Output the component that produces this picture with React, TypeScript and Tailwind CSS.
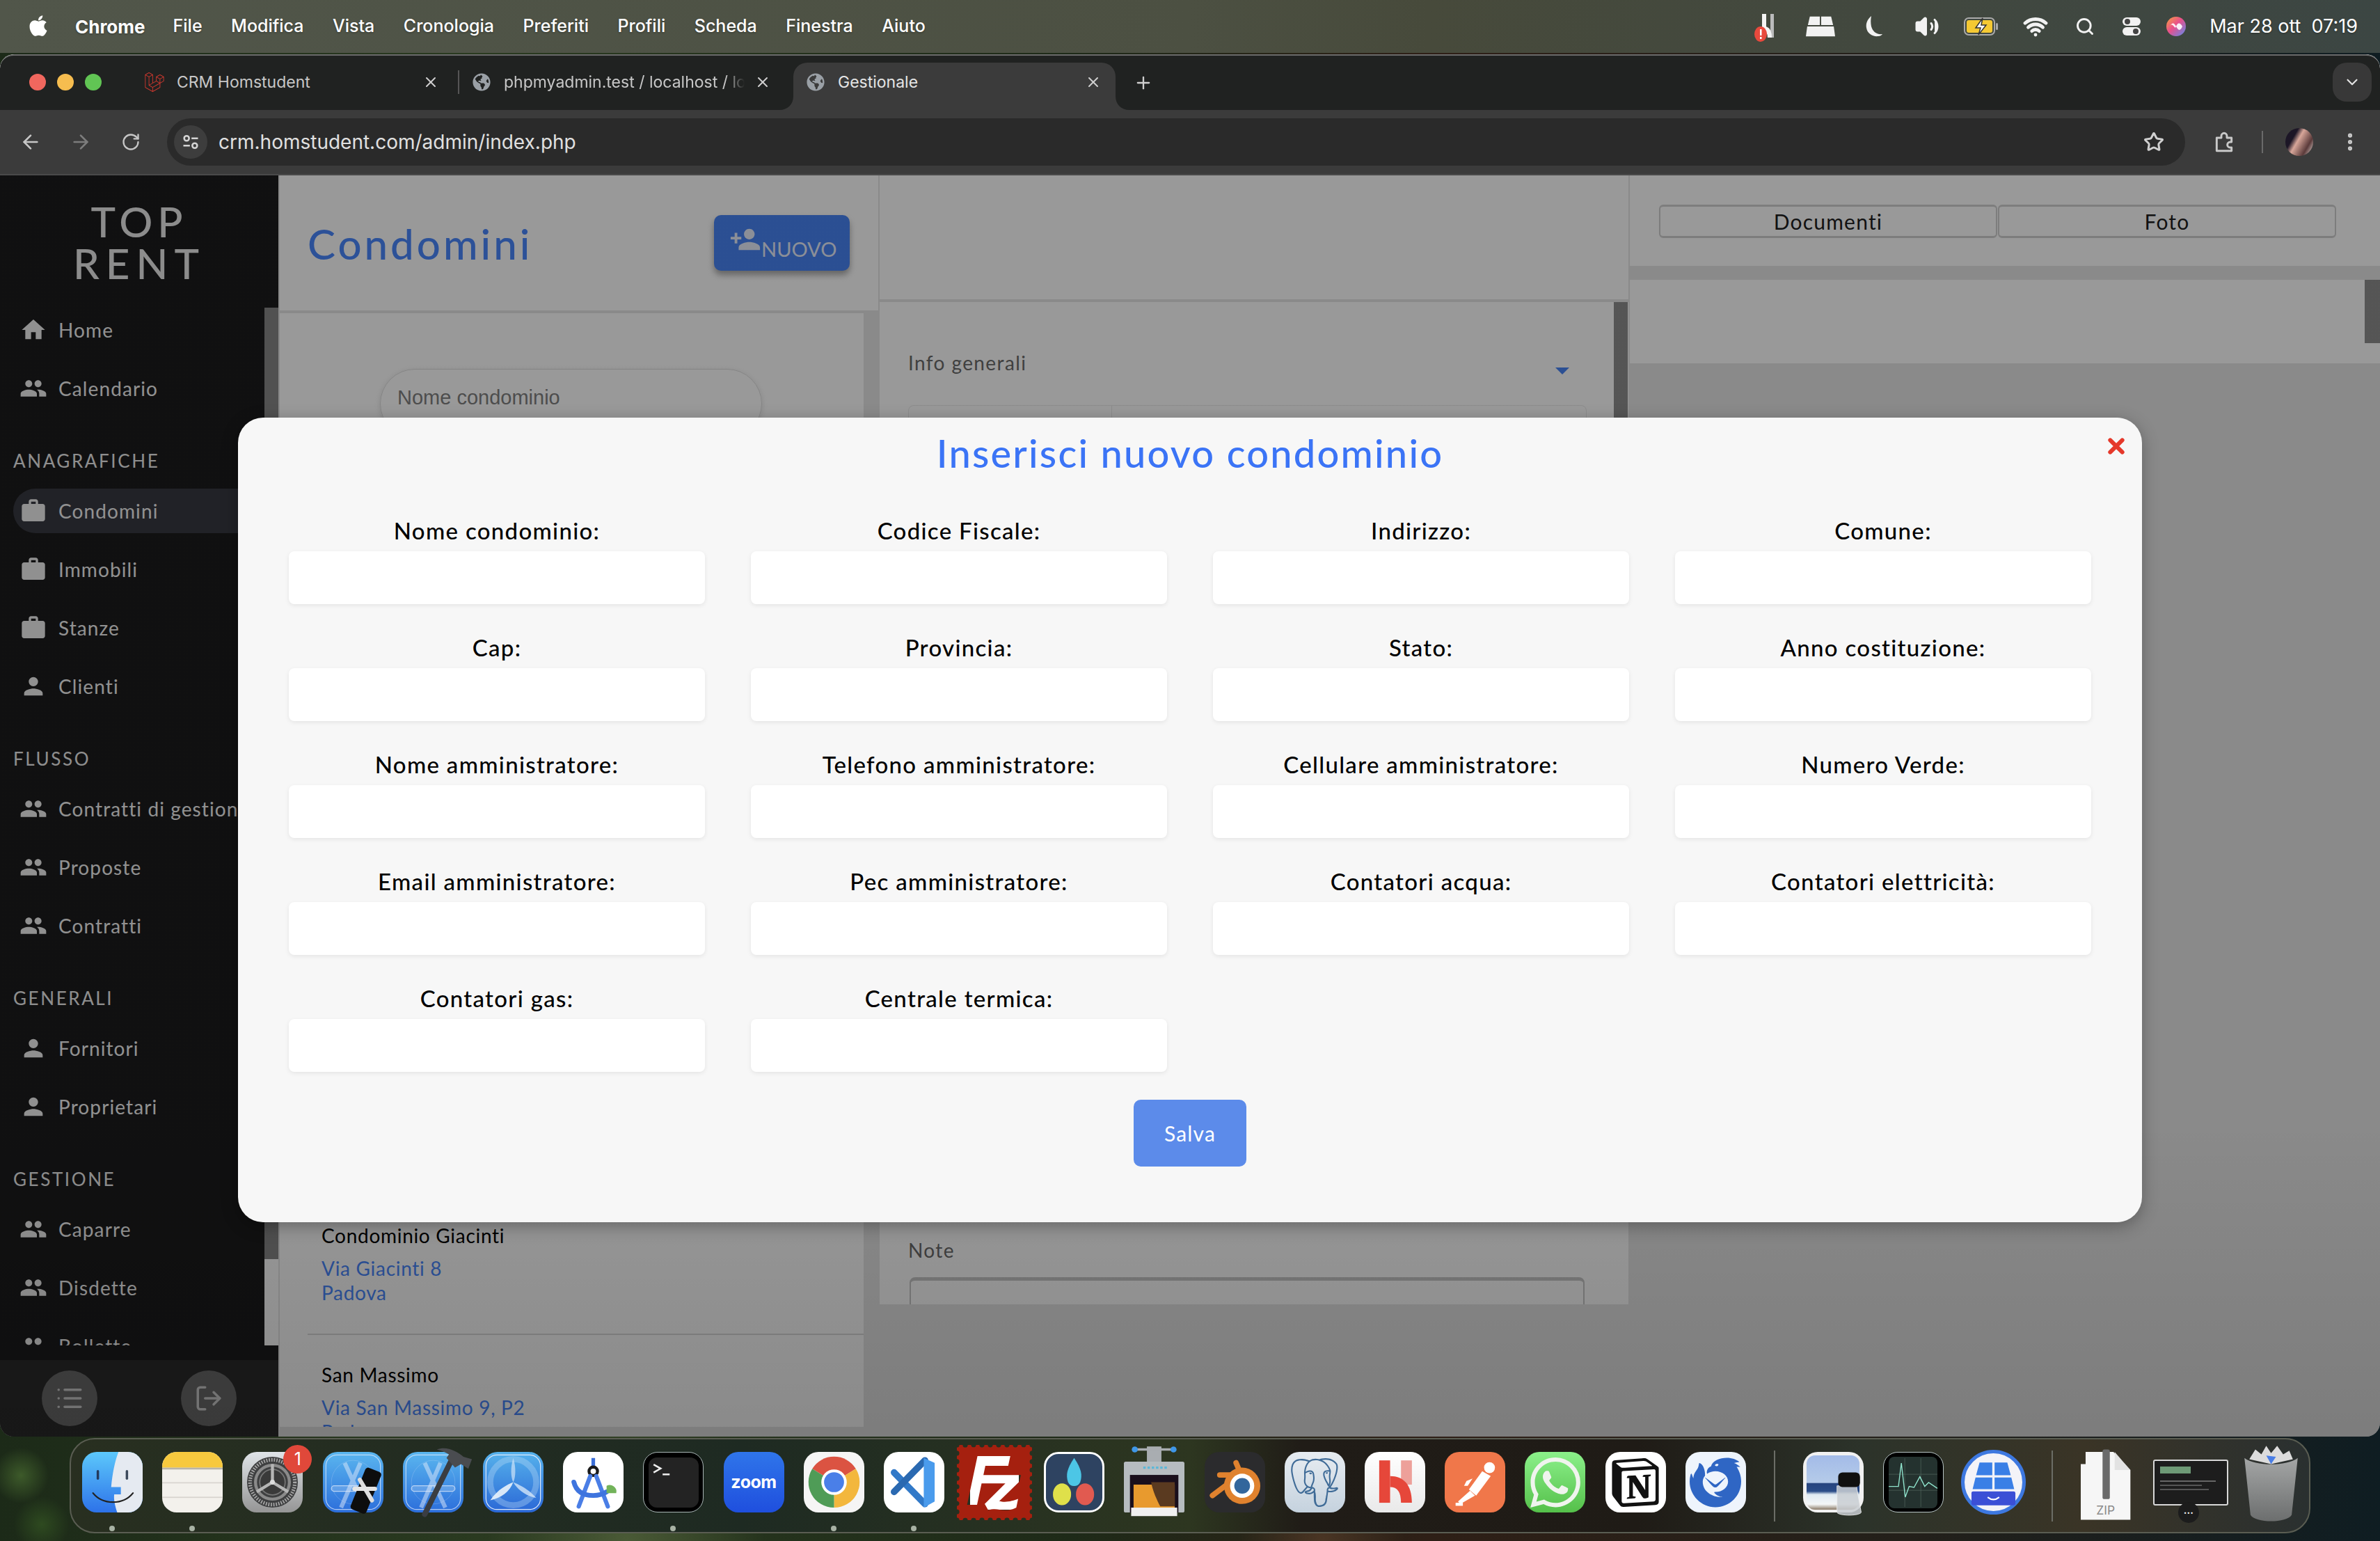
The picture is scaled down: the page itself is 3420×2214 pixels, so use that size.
import React from "react";
import { ArrowLeft, ArrowRight, RotateCw, Star, MoreVertical, Plus, X, ChevronDown, Search, Wifi, List, LogOut, Volume2 } from "lucide-react";
import { FaApple, FaGlobeAmericas } from "react-icons/fa";
import { SiLaravel, SiPostgresql, SiWhatsapp, SiNotion, SiThunderbird, SiFilezilla } from "react-icons/si";

const APP = "font-['Lato','Open_Sans',sans-serif]";

const P = {
  home: "M10 20v-6h4v6h5v-8h3L12 3 2 12h3v8z",
  people: "M16 11c1.66 0 2.99-1.34 2.99-3S17.66 5 16 5c-1.66 0-3 1.34-3 3s1.34 3 3 3zm-8 0c1.66 0 2.99-1.34 2.99-3S9.66 5 8 5C6.34 5 5 6.34 5 8s1.34 3 3 3zm0 2c-2.33 0-7 1.17-7 3.5V19h14v-2.5c0-2.33-4.67-3.5-7-3.5zm8 0c-.29 0-.62.02-.97.05 1.16.84 1.97 1.97 1.97 3.45V19h6v-2.5c0-2.33-4.67-3.5-7-3.5z",
  work: "M20 6h-4V4c0-1.11-.89-2-2-2h-4c-1.11 0-2 .89-2 2v2H4c-1.11 0-1.99.89-1.99 2L2 19c0 1.11.89 2 2 2h16c1.11 0 2-.89 2-2V8c0-1.11-.89-2-2-2zm-6 0h-4V4h4v2z",
  person: "M12 12c2.21 0 4-1.79 4-4s-1.79-4-4-4-4 1.79-4 4 1.79 4 4 4zm0 2c-2.67 0-8 1.34-8 4v2h16v-2c0-2.66-5.33-4-8-4z",
  add: "M15 12c2.21 0 4-1.79 4-4s-1.79-4-4-4-4 1.79-4 4 1.79 4 4 4zm-9-2V7H4v3H1v2h3v3h2v-3h3v-2H6zm9 4c-2.67 0-8 1.34-8 4v2h16v-2c0-2.66-5.33-4-8-4z",
};

const MI = ({ d, className }: { d: string; className: string }) => (
  <svg viewBox="0 0 24 24" className={className} fill="currentColor"><path d={d} /></svg>
);

const sections: { title?: string; items: [string, string, boolean?][] }[] = [
  { items: [["home", "Home"], ["people", "Calendario"]] },
  { title: "ANAGRAFICHE", items: [["work", "Condomini", true], ["work", "Immobili"], ["work", "Stanze"], ["person", "Clienti"]] },
  { title: "FLUSSO", items: [["people", "Contratti di gestione"], ["people", "Proposte"], ["people", "Contratti"]] },
  { title: "GENERALI", items: [["person", "Fornitori"], ["person", "Proprietari"]] },
  { title: "GESTIONE", items: [["people", "Caparre"], ["people", "Disdette"], ["people", "Bollette"]] },
];

const fields = [
  "Nome condominio:", "Codice Fiscale:", "Indirizzo:", "Comune:",
  "Cap:", "Provincia:", "Stato:", "Anno costituzione:",
  "Nome amministratore:", "Telefono amministratore:", "Cellulare amministratore:", "Numero Verde:",
  "Email amministratore:", "Pec amministratore:", "Contatori acqua:", "Contatori elettricità:",
  "Contatori gas:", "Centrale termica:",
];

function MenuBar() {
  const items = ["File", "Modifica", "Vista", "Cronologia", "Preferiti", "Profili", "Scheda", "Finestra", "Aiuto"];
  return (
    <div className="h-[76px] flex items-center bg-[linear-gradient(90deg,#51564a,#4c5042_50%,#474a3b_60%,#3c4643)] text-white font-['Inter',sans-serif] text-[25px] font-medium [text-shadow:0_1px_3px_rgba(0,0,0,.35)]">
      <FaApple className="w-[34px] h-[34px] ml-[38px] mr-[36px] -mt-[3px]" />
      <span className="font-bold text-[26px] mr-[40px]">Chrome</span>
      <div className="flex gap-[41.5px]">{items.map((t) => <span key={t}>{t}</span>)}</div>
      <div className="ml-auto flex items-center mr-[32px]">
        <span className="w-[80px] flex justify-center">
          <svg viewBox="0 0 44 44" className="w-[44px] h-[44px] overflow-visible">
            <rect x="18" y="4" width="6" height="24" fill="#f4f4f4" /><rect x="30" y="4" width="5" height="34" fill="#bbb" /><path d="M18 22q14 -2 14 16h-6q0 -10 -8 -10z" fill="#f4f4f4" />
            <ellipse cx="16" cy="33" rx="9" ry="11" fill="#e8493d" /><rect x="15" y="26" width="2.5" height="9" fill="#fff" /><rect x="15" y="37" width="2.5" height="3" fill="#fff" />
          </svg>
        </span>
        <span className="w-[79px] flex justify-center">
          <svg viewBox="0 0 44 30" className="w-[42px] h-[30px]" fill="#f2f2f2">
            <path d="M6 0h15v13H3zM23 0h15l3 13H23zM2 15h40l2 15H0z" />
          </svg>
        </span>
        <span className="w-[75px] flex justify-center">
          <svg viewBox="0 0 28 30" className="w-[28px] h-[30px]" fill="#f2f2f2"><path d="M10 0C4 5 2 11 3 17c1 8 9 13 17 12 3 0 5-2 6-3-9 1-14-4-16-11C9 10 9 5 10 0z" /></svg>
        </span>
        <span className="w-[77px] flex justify-center"><Volume2 className="w-[36px] h-[36px] text-[#f2f2f2] fill-[#f2f2f2]" /></span>
        <span className="w-[80px] flex justify-center">
          <svg viewBox="0 0 50 26" className="w-[50px] h-[26px]">
            <rect x="1" y="1" width="43" height="24" rx="6" fill="none" stroke="#aaa" strokeWidth="2" /><rect x="4" y="4" width="37" height="18" rx="3" fill="#f5c933" /><rect x="46" y="8" width="3" height="10" rx="1.5" fill="#aaa" /><path d="M27 1l-10 14h7l-3 10 11-14h-7z" fill="#fff" stroke="#333" strokeWidth="1.5" />
          </svg>
        </span>
        <span className="w-[75px] flex justify-center"><Wifi className="w-[36px] h-[36px] text-[#f2f2f2]" strokeWidth={3.2} /></span>
        <span className="w-[68px] flex justify-center"><Search className="w-[28px] h-[28px] text-[#f2f2f2]" strokeWidth={2.5} /></span>
        <span className="w-[65px] flex justify-center">
          <svg viewBox="0 0 28 28" className="w-[28px] h-[28px]">
            <rect x="1" y="1" width="26" height="12" rx="6" fill="#f2f2f2" /><circle cx="8" cy="7" r="4" fill="#444" /><rect x="1" y="15" width="26" height="12" rx="6" fill="#f2f2f2" /><circle cx="20" cy="21" r="4" fill="#444" />
          </svg>
        </span>
        <span className="w-[64px] flex justify-center">
          <svg viewBox="0 0 30 30" className="w-[30px] h-[30px]">
            <defs><linearGradient id="siri" x1="0" y1="0" x2="1" y2="1"><stop offset="0" stopColor="#f6a33c" /><stop offset=".45" stopColor="#ea4f8b" /><stop offset="1" stopColor="#5a8cf0" /></linearGradient></defs>
            <circle cx="15" cy="15" r="14" fill="url(#siri)" /><path d="M6 15c4-8 7 6 9 0s6-6 9 0c-3 7-6 6-9 0s-6-6-9 0z" fill="#fff" opacity=".9" />
          </svg>
        </span>
        <span className="ml-[16px] font-normal text-[27px] whitespace-pre">Mar 28 ott  07:19</span>
      </div>
    </div>
  );
}

function Tab({ icon, title, width, active, fade, pr }: { icon: React.ReactNode; title: string; width: string; active?: boolean; fade?: boolean; pr: string }) {
  return (
    <div className={`relative h-[68px] flex items-center shrink-0 ${width} ${pr} ${active ? "bg-[#3b3b3b] rounded-t-[20px] text-[#e4e4e4]" : "text-[#c7c7c7]"} pl-[20px] pb-[12px]`}>
      <span className="w-[24px] h-[24px] flex items-center justify-center shrink-0">{icon}</span>
      <span className={`ml-[20px] text-[23px] whitespace-nowrap overflow-hidden flex-1 ${fade ? "mr-[14px] [mask-image:linear-gradient(90deg,#000_92%,transparent)]" : ""}`}>{title}</span>
      <X className="w-[24px] h-[24px] shrink-0 text-[#d0d0d0]" />
      {active && (
        <>
          <svg viewBox="0 0 20 20" className="absolute left-[-20px] bottom-0 w-[20px] h-[20px]"><path d="M20 0v20H0c12 0 20-8 20-20z" fill="#3b3b3b" /></svg>
          <svg viewBox="0 0 20 20" className="absolute right-[-20px] bottom-0 w-[20px] h-[20px]"><path d="M0 0v20h20C8 20 0 12 0 0z" fill="#3b3b3b" /></svg>
        </>
      )}
    </div>
  );
}

function Chrome() {
  return (
    <div className="shrink-0 font-['Inter',sans-serif]">
      <div className="h-[80px] bg-[#202221] border-t-2 border-[#6a6a6a] rounded-t-[20px] flex items-end">
        <div className="h-[68px] flex items-center w-[190px] shrink-0 pl-[42px] gap-[16px] pb-[12px]">
          <span className="w-[24px] h-[24px] rounded-full bg-[#f0675e]" />
          <span className="w-[24px] h-[24px] rounded-full bg-[#f6bd4f]" />
          <span className="w-[24px] h-[24px] rounded-full bg-[#61c554]" />
        </div>
        <Tab width="w-[468px]" pr="pr-[27px]" icon={<SiLaravel className="w-[28px] h-[30px] text-[#d3392f] shrink-0" />} title="CRM Homstudent" />
        <div className="w-[2px] h-[34px] bg-[#555] mb-[23px] shrink-0" />
        <Tab width="w-[480px]" pr="pr-[32px]" fade icon={<FaGlobeAmericas className="w-[26px] h-[26px] text-[#9aa0a6] shrink-0" />} title="phpmyadmin.test / localhost / localhost" />
        <Tab width="w-[463px]" pr="pr-[20px]" active icon={<FaGlobeAmericas className="w-[26px] h-[26px] text-[#9aa0a6] shrink-0" />} title="Gestionale" />
        <Plus className="w-[28px] h-[28px] text-[#cfcfcf] ml-[26px] mb-[25px]" />
        <div className="ml-auto mr-[12px] mb-[12px] w-[56px] h-[56px] rounded-[20px] bg-[#383838] flex items-center justify-center">
          <ChevronDown className="w-[26px] h-[26px] text-[#e2e2e2]" />
        </div>
      </div>
      <div className="h-[92px] bg-[#3b3b3b] flex items-center">
        <ArrowLeft className="w-[32px] h-[32px] text-[#c6c6c6] ml-[28px]" />
        <ArrowRight className="w-[32px] h-[32px] text-[#7d7d7d] ml-[40px]" />
        <RotateCw className="w-[28px] h-[28px] text-[#c6c6c6] ml-[42px]" />
        <div className="ml-[38px] w-[2900px] h-[68px] rounded-full bg-[#2a2a2a] flex items-center pl-[10px]">
          <span className="w-[48px] h-[48px] rounded-full bg-[#3d3d3d] flex items-center justify-center">
            <svg viewBox="0 0 24 24" className="w-[28px] h-[28px]" fill="none" stroke="#d4d4d4" strokeWidth="2.2">
              <circle cx="7" cy="7.5" r="3" /><path d="M13 7.5h8M3 16.5h8" /><circle cx="17" cy="16.5" r="3" />
            </svg>
          </span>
          <span className="ml-[16px] text-[28px] text-[#e0e0e0]">crm.homstudent.com/admin/index.php</span>
          <Star className="ml-auto mr-[30px] w-[30px] h-[30px] text-[#d0d0d0]" strokeWidth={2.4} />
        </div>
        <svg viewBox="0 0 24 24" className="w-[32px] h-[32px] ml-[40px]" fill="none" stroke="#c8c8c8" strokeWidth="2.2" strokeLinejoin="round">
          <path d="M4 7.5h5V5.5a3 3 0 0 1 6 0v2h5v4.5h-1.5a3 3 0 0 0 0 6H20v3.5H4z" />
        </svg>
        <div className="w-[2px] h-[32px] bg-[#6a6a6a] ml-[38px]" />
        <div className="w-[40px] h-[40px] rounded-full ml-[32px] bg-[linear-gradient(120deg,#1c1626_30%,#d8a79a_45%,#5a3a3a_75%,#efe6e0)]" />
        <MoreVertical className="w-[32px] h-[32px] text-[#c8c8c8] ml-[37px]" strokeWidth={2.6} />
      </div>
    </div>
  );
}

function Sidebar() {
  return (
    <aside className={`w-[400px] shrink-0 h-full bg-[#1b1b1c] flex flex-col ${APP}`}>
      <div className="h-[190px] shrink-0 pt-[36px] text-center text-[#e9e9e9] text-[60px] leading-[60px] font-medium">
        <div className="tracking-[7px]">TOP</div>
        <div className="tracking-[9px]">RENT</div>
      </div>
      <div className="flex h-[1491px] shrink-0 overflow-hidden">
        <nav className="w-[380px] shrink-0">
          {sections.map((s, i) => (
            <div key={i} className={i ? "mt-[57px]" : ""}>
              {s.title && <div className="h-[30px] leading-[30px] ml-[19px] text-[26px] tracking-[2.6px] text-[#ececec] mb-[25px]">{s.title}</div>}
              <div className="flex flex-col gap-[20px]">
                {s.items.map(([ic, t, on]) => (
                  <div key={t} className={`h-[64px] ml-[19px] pl-[9px] flex items-center gap-[16px] whitespace-nowrap text-[#f2f2f2] text-[28px] tracking-[1.1px] ${on ? "bg-[#373841] rounded-l-full" : ""}`}>
                    <MI d={(P as any)[ic]} className="w-[40px] h-[40px] shrink-0 text-[#f0f0f0]" />
                    <span>{t}</span>
                  </div>
                ))}
              </div>
            </div>
          ))}
        </nav>
        <div className="w-[20px] shrink-0 bg-white"><div className="h-[1367px] bg-[#878787]" /></div>
      </div>
      <div className="flex-1 mt-[21px] bg-[#2b2b2b] flex items-center pl-[60px] gap-[120px]">
        <span className="w-[80px] h-[80px] rounded-full bg-[#6b6b6b] flex items-center justify-center"><List className="w-[42px] h-[42px] text-[#d0d0d0]" /></span>
        <span className="w-[80px] h-[80px] rounded-full bg-[#6b6b6b] flex items-center justify-center"><LogOut className="w-[42px] h-[42px] text-[#d0d0d0]" /></span>
      </div>
    </aside>
  );
}

function Column1() {
  return (
    <div className={`w-[860px] shrink-0 ml-[2px] flex flex-col ${APP}`}>
      <div className="h-[194px] bg-white flex items-center pl-[40px] shrink-0">
        <h1 className="w-[584px] text-[60px] text-[#4987fd] tracking-[4px] font-medium leading-[72px] mt-[2px]">Condomini</h1>
        <div className="w-[195px] h-[80px] rounded-[10px] bg-[#4884f5] shadow-[0_6px_10px_rgba(0,0,0,.35)] flex items-center pl-[22px] text-[#e8eefc]">
          <MI d={P.add} className="w-[46px] h-[46px] shrink-0 -mt-[10px]" />
          <span className="text-[29px] mt-[18px]">NUOVO</span>
        </div>
      </div>
      <div className="mt-[4px] h-[1600px] w-[839px] bg-white overflow-hidden text-[28px] leading-[36px] tracking-[0.7px]">
        <div className="ml-[144px] mt-[80px] h-[100px] w-[549px] rounded-full border border-[#ddd] shadow-[0_2px_8px_rgba(0,0,0,.12)] flex items-start pt-[22px] pl-[24px] text-[#808080] font-['Liberation_Sans',sans-serif] text-[29px] tracking-normal">Nome condominio</div>
        <div className="mt-[1127px] pl-[60px]">
          <div className="text-black">Condominio Giacinti</div>
          <div className="mt-[12px] text-[#4987fd] leading-[35px]">Via Giacinti 8<br />Padova</div>
        </div>
        <div className="mt-[41px] ml-[40px] h-[2px] bg-[#dcdcdc]" />
        <div className="mt-[39px] pl-[60px]">
          <div className="text-black">San Massimo</div>
          <div className="mt-[12px] text-[#4987fd] leading-[35px]">Via San Massimo 9, P2<br />Padova</div>
        </div>
      </div>
    </div>
  );
}

function Column2() {
  return (
    <div className={`w-[1076px] shrink-0 ml-[2px] flex flex-col ${APP}`}>
      <div className="h-[178px] bg-white shrink-0" />
      <div className="mt-[4px] h-[1440px] bg-white flex overflow-hidden">
        <div className="flex-1 text-[28px] leading-[36px] text-[#6a6a6a] tracking-[1.4px]">
          <div className="pt-[69px] pl-[41px] pr-[64px] flex justify-between items-center">
            <span>Info generali</span>
            <svg viewBox="0 0 20 10" className="w-[20px] h-[10px] mt-[24px]"><path d="M0 0h20L10 10z" fill="#4884f5" /></svg>
          </div>
          <div className="mt-[43px] ml-[41px] mr-[39px] h-[200px] flex border border-[#eaeaea] rounded-t-[8px]">
            <div className="w-[292px] border-r border-[#eaeaea]" />
          </div>
          <div className="mt-[996px] pl-[41px]">Note</div>
          <div className="mt-[21px] ml-[43px] mr-[42px] h-[80px] border-2 border-t-[5px] border-[#c8c8c8] rounded-t-[8px]" />
        </div>
        <div className="w-[20px] bg-white shrink-0"><div className="h-[800px] bg-[#8e8e8e]" /></div>
        <div className="w-[1px] shrink-0" />
      </div>
    </div>
  );
}

function Column3() {
  return (
    <div className={`flex-1 ml-[2px] flex flex-col ${APP}`}>
      <div className="h-[130px] bg-white shrink-0 pt-[42px] pl-[42px] flex gap-[1px] text-[#1d1d1d] text-[30px] tracking-[1.2px]">
        {["Documenti", "Foto"].map((t) => (
          <div key={t} className="w-[486px] h-[48px] border-2 border-t-[3px] border-b-[3px] border-[#d0d0d0] rounded-[6px] flex items-center justify-center">{t}</div>
        ))}
      </div>
      <div className="mt-[20px] h-[120px] bg-white flex justify-end shrink-0">
        <div className="w-[22px] h-[91px] bg-[#8e8e8e]" />
      </div>
    </div>
  );
}

function Modal() {
  return (
    <div className={`absolute left-[342px] top-[348px] w-[2736px] h-[1156px] bg-[#f7f7f7] rounded-[36px] shadow-[0_6px_24px_rgba(0,0,0,.3)] pt-[16px] ${APP}`}>
      <svg viewBox="0 0 24 24" className="absolute right-[24px] top-[28px] w-[26px] h-[26px]"><path d="M4 4l16 16M20 4L4 20" stroke="#e5382a" strokeWidth="5.5" strokeLinecap="round" /></svg>
      <h2 className="text-center text-[56px] leading-[70px] text-[#3b74f6] font-medium tracking-[2.2px]">Inserisci nuovo condominio</h2>
      <div className="mt-[58px] px-[73px] grid grid-cols-4 gap-x-[66px] gap-y-[44px]">
        {fields.map((f) => (
          <div key={f} className="flex flex-col">
            <label className="h-[36px] leading-[36px] text-center text-black text-[33px] font-medium tracking-[1.3px] mb-[12px] whitespace-nowrap">{f}</label>
            <div className="h-[76px] bg-white rounded-[8px] shadow-[0_2px_6px_rgba(0,0,0,.08)]" />
          </div>
        ))}
      </div>
      <div className="mt-[40px] flex justify-center">
        <div className="w-[162px] h-[96px] rounded-[10px] bg-[#5c8bea] text-white text-[30px] tracking-[1.2px] flex items-center justify-center">Salva</div>
      </div>
    </div>
  );
}

/* ---- Dock ---- */
const Sq = ({ children, bg, cls = "" }: { children?: React.ReactNode; bg: string; cls?: string }) => (
  <div className={`w-[87px] h-[87px] rounded-[21px] overflow-hidden flex items-center justify-center ${bg} ${cls}`}>{children}</div>
);
const S = ({ children, cls = "w-[87px] h-[87px]" }: { children: React.ReactNode; cls?: string }) => (
  <svg viewBox="0 0 100 100" className={`${cls} overflow-visible`}>{children}</svg>
);
const Dev = () => (
  <g fill="none" stroke="#dfeafa" strokeOpacity=".75">
    <rect x="5" y="5" width="90" height="90" rx="18" strokeWidth="1.4" />
    <circle cx="50" cy="50" r="36" strokeWidth="1" strokeOpacity=".25" />
    <path d="M36 18L70 92M62 18L30 92" strokeWidth="7" strokeOpacity=".5" />
    <rect x="14" y="56" width="72" height="9" rx="4.5" strokeWidth="1.4" fill="#ffffff" fillOpacity=".18" />
  </g>
);

const dock: { node: React.ReactNode; dot?: boolean; sep?: boolean }[] = [
  { dot: true, node: <Sq bg="bg-[linear-gradient(180deg,#5cc8fb,#2d72e9)]"><S>
    <path d="M60 0H100V100H58C54 88 52 78 53 70H64V58H48C50 36 54 16 60 0Z" fill="#e5eaf1" />
    <rect x="24" y="30" width="4" height="16" rx="2" fill="#243a5c" /><rect x="72" y="30" width="4" height="16" rx="2" fill="#3c4a5c" />
    <path d="M18 68C34 88 68 88 84 68" fill="none" stroke="#222" strokeWidth="2.6" strokeLinecap="round" />
  </S></Sq> },
  { dot: true, node: <Sq bg="bg-[#f3f1ec]"><S>
    <rect width="100" height="26" fill="#f7c93e" /><rect y="26" width="100" height="3" fill="#b9b4a8" />
    <rect y="50" width="100" height="2" fill="#d8d5cf" /><rect y="74" width="100" height="2" fill="#d8d5cf" />
  </S></Sq> },
  { node: <div className="relative"><Sq bg="bg-[linear-gradient(180deg,#dfe4e8,#959595)]"><S>
      <circle cx="50" cy="50" r="42" fill="#3e3f40" /><circle cx="50" cy="50" r="37" fill="none" stroke="#a6a6a6" strokeWidth="6" strokeDasharray="2 2.2" />
      <circle cx="50" cy="50" r="28" fill="none" stroke="#8a8a8a" strokeWidth="5" /><circle cx="50" cy="50" r="21" fill="#3a3a3a" stroke="#777" strokeWidth="2" />
      <path d="M50 50V20M50 50L24 66M50 50L76 66" stroke="#b5b5b5" strokeWidth="5" /><circle cx="50" cy="50" r="4" fill="#ddd" />
    </S></Sq>
    <div className="absolute left-[59px] -top-[10px] w-[41px] h-[41px] rounded-full bg-[#e0483a] text-white text-[25px] font-['Inter',sans-serif] flex items-center justify-center">1</div></div> },
  { node: <div className="relative"><Sq bg="bg-[linear-gradient(180deg,#5ab6ef,#2c6edb)]"><S><Dev /></S></Sq>
    <svg viewBox="0 0 100 100" className="absolute inset-0 w-[87px] h-[87px] overflow-visible"><rect x="57" y="27" width="28" height="74" rx="5" transform="rotate(22 71 64)" fill="#0d0d0d" /><path d="M61 46L81 80" stroke="#ddd" strokeWidth="7" strokeLinecap="round" /><path d="M52 61H86" stroke="#e4e4e4" strokeWidth="7" strokeLinecap="round" /></svg></div> },
  { node: <div className="relative"><Sq bg="bg-[linear-gradient(180deg,#5ab6ef,#2c6edb)]"><S><Dev /></S></Sq>
    <svg viewBox="0 0 100 100" className="absolute inset-0 w-[87px] h-[87px] overflow-visible"><path d="M36 103L80 14" stroke="#3a3d42" strokeWidth="9" strokeLinecap="round" /><path d="M56 -4C72 -10 88 -2 100 8L114 12L108 28L96 20L86 26L72 10L76 4C70 0 62 -2 56 -4Z" fill="#4a4c50" /></svg></div> },
  { node: <Sq bg="bg-[linear-gradient(180deg,#56b2ec,#2a67d6)]"><S>
    <rect x="5" y="5" width="90" height="90" rx="18" fill="none" stroke="#dfeafa" strokeWidth="1.4" />
    <circle cx="50" cy="50" r="38" fill="none" stroke="#bcdcf6" strokeOpacity=".35" strokeWidth="10" />
    <path d="M50 10C55 26 54 42 50 50C46 42 45 26 50 10Z" fill="#cfe4f8" fillOpacity=".7" /><path d="M50 50C60 54 76 62 88 76C74 74 58 64 50 50Z" fill="#dcebf9" fillOpacity=".75" /><path d="M50 50C40 54 24 62 12 80C30 76 44 66 50 50Z" fill="#eaf3fb" fillOpacity=".9" />
  </S></Sq> },
  { node: <Sq bg="bg-white"><S>
    <path d="M50 10V24" stroke="#3b6fd8" strokeWidth="6" /><circle cx="50" cy="32" r="7" fill="#fff" stroke="#1b1b1b" strokeWidth="5" />
    <path d="M45 40L26 90M55 40L74 90" stroke="#4a7ee6" strokeWidth="7" strokeLinecap="round" /><path d="M18 50C22 66 34 72 50 72C60 72 66 70 72 66" fill="none" stroke="#3e74de" strokeWidth="8" strokeLinecap="round" />
    <path d="M72 56a11 11 0 0 1 16 12H72z" fill="#72b35a" />
  </S></Sq> },
  { dot: true, node: <Sq bg="bg-black" cls="border border-[#a9b6b6]"><div className="w-[72px] h-[72px] rounded-[12px] bg-[#232323] flex items-start"><S cls="w-[72px] h-[72px]"><path d="M10 14L24 22L10 30" fill="none" stroke="#eee" strokeWidth="3.5" /><rect x="28" y="32" width="14" height="3.5" fill="#eee" /></S></div></Sq> },
  { node: <Sq bg="bg-[linear-gradient(180deg,#2f75ea,#1f4fde)]"><span className="text-white font-['Inter',sans-serif] font-bold text-[25px] tracking-[-0.5px]">zoom</span></Sq> },
  { dot: true, node: <Sq bg="bg-[#f5f5f5]"><S>
    <path d="M50 50L14 28A42 42 0 0 1 86 28Z" fill="#db5342" /><path d="M50 50L86 28A42 42 0 0 1 50 92Z" fill="#f3b73d" /><path d="M50 50L50 92A42 42 0 0 1 14 28Z" fill="#4f9c57" />
    <circle cx="50" cy="50" r="21" fill="#fff" /><circle cx="50" cy="50" r="16.5" fill="#4a7fe8" />
  </S></Sq> },
  { dot: true, node: <Sq bg="bg-white"><S>
    <path d="M17 34L68 86" stroke="#3179c8" strokeWidth="11" strokeLinecap="round" /><path d="M17 66L68 14" stroke="#2a69b1" strokeWidth="11" strokeLinecap="round" />
    <path d="M66 10L84 18V82L66 92Z" fill="#4a9bec" />
  </S></Sq> },
  { node: <div className="relative w-[87px] h-[87px] flex items-center justify-center">
    <div className="absolute w-[70px] h-[78px] bg-white" />
    <SiFilezilla className="absolute w-[108px] h-[108px] text-[#a5200f] max-w-none" /></div> },
  { node: <Sq bg="bg-[#2e4361]" cls="border-[3px] border-white"><S>
    <path d="M50 10C62 28 64 38 60 50A11 11 0 0 1 40 50C36 38 38 28 50 10Z" fill="#4cc6e6" />
    <ellipse cx="30" cy="70" rx="15" ry="18" fill="#dfe04a" /><ellipse cx="68" cy="70" rx="15" ry="18" fill="#e15a50" />
  </S></Sq> },
  { node: <S>
    <rect x="38" y="-9" width="24" height="26" fill="#a9adb1" /><path d="M20 -4H80" stroke="#a9adb1" strokeWidth="4" /><circle cx="18" cy="-4" r="5" fill="#3f97e8" /><circle cx="82" cy="-4" r="5" fill="#3f97e8" />
    <rect x="0" y="16" width="100" height="84" rx="3" fill="#b6bcc0" /><rect x="10" y="38" width="80" height="62" fill="#1a0f1c" />
    <path d="M32 26H72" stroke="#5cb7d8" strokeWidth="4" strokeDasharray="4 3" />
    <rect x="16" y="54" width="68" height="46" fill="#e89a2e" /><path d="M45 50H84V90H60C54 78 48 66 45 50Z" fill="#5a3a20" />
    <rect x="12" y="92" width="76" height="14" fill="#f0f0f0" />
  </S> },
  { node: <Sq bg="bg-[#2b2b2d]"><S>
    <path d="M62 42L52 18M60 38H25M42 50L13 72" stroke="#e0822e" strokeWidth="9" strokeLinecap="round" />
    <circle cx="62" cy="56" r="30" fill="#e0822e" /><circle cx="62" cy="56" r="20" fill="#fff" /><circle cx="62" cy="56" r="13" fill="#33669c" />
  </S></Sq> },
  { node: <Sq bg="bg-[linear-gradient(180deg,#e7ecf1,#c5d2de)]"><SiPostgresql className="w-[70px] h-[70px] text-[#3f6b97]" /></Sq> },
  { node: <Sq bg="bg-[linear-gradient(180deg,#ffffff,#e9e9e9)]"><S>
    <rect x="24" y="14" width="18" height="70" fill="#e6473a" /><rect x="60" y="14" width="18" height="40" fill="#eda09a" /><path d="M42 40C64 40 78 54 78 84H60C60 66 54 58 42 58Z" fill="#e6473a" />
  </S></Sq> },
  { node: <Sq bg="bg-[#f0774a]"><S>
    <g fill="#fff"><circle cx="74" cy="26" r="9" /><path d="M62 32L76 40L52 72L40 62Z" /><path d="M42 64L50 72L26 86L22 82Z" /><path d="M36 48L46 44L38 56L32 56Z" /><rect x="18" y="84" width="12" height="5" /></g>
  </S></Sq> },
  { node: <Sq bg="bg-[linear-gradient(180deg,#8bf08a,#55c04a)]"><SiWhatsapp className="w-[72px] h-[72px] text-[#f0f4ee]" /></Sq> },
  { node: <Sq bg="bg-white"><SiNotion className="w-[70px] h-[70px] text-[#111]" /></Sq> },
  { node: <Sq bg="bg-[#eef4fc]"><SiThunderbird className="w-[74px] h-[74px] text-[#2f66c4]" /></Sq> },
  { sep: true, node: null },
  { node: <div className="relative"><Sq bg="bg-[#f1f1f1]"><div className="w-[76px] h-[78px] rounded-[12px] bg-[linear-gradient(180deg,#a3bbe8_0%,#b5cbe9_50%,#27457f_52%,#2b4d88_66%,#dfeaf2_72%,#f4f6f7_90%,#8a7a66)]" /></Sq>
    <svg viewBox="0 0 100 100" className="absolute inset-0 w-[87px] h-[87px] overflow-visible"><path d="M56 56H88L96 100C92 106 60 106 56 100Z" fill="#c9ced2" fillOpacity=".85" stroke="#eee" /><rect x="58" y="34" width="36" height="24" rx="7" fill="#101010" /></svg></div> },
  { node: <Sq bg="bg-black" cls="border border-[#b7c5c5]"><div className="w-[70px] h-[74px] bg-[#24322f] rounded-[8px]"><S cls="w-[70px] h-[74px]">
    <path d="M0 33H100M0 66H100M33 0V100M66 0V100" stroke="#52665f" strokeWidth="1" /><path d="M0 58H20L26 10L34 80L42 58L52 60L64 38L74 58L82 50L100 62" fill="none" stroke="#8fe3cc" strokeWidth="2" />
  </S></div></Sq> },
  { node: <div className="relative w-[87px] h-[87px]"><div className="absolute -left-[3px] -top-[3px] w-[93px] h-[93px] rounded-full bg-[#f3f3f8] border-[5px] border-[#3d78e0]"><S cls="w-[83px] h-[83px]">
    <path d="M26 16H48V38H20zM52 16H74L80 38H52zM19 42H48V62H14zM52 42H81L86 62H52z" fill="#3a7fe6" /><rect x="12" y="66" width="76" height="24" rx="3" fill="#3b4fd6" /><path d="M40 76Q50 84 60 76" stroke="#fff" strokeWidth="2.5" fill="none" />
  </S></div></div> },
  { sep: true, node: null },
  { node: <S>
    <path d="M8 0H54L82 30V112H0V20H8Z" fill="#f6f6f6" /><path d="M56 0L82 30H56Z" fill="#e2e2e2" /><rect x="36" y="-4" width="12" height="82" rx="3" fill="#6a6a6a" />
    <text x="41" y="103" textAnchor="middle" fontSize="20" fill="#8a8a8a" fontFamily="Inter, sans-serif">ZIP</text>
  </S> },
  { node: <div className="relative w-[87px] h-[87px]">
    <div className="absolute -left-[11px] top-[11px] w-[108px] h-[66px] bg-[#1d1d1d] border-2 border-[#d8d8d8] rounded-[3px] p-[8px]">
      <div className="w-[44px] h-[10px] bg-[#6e9a76]" /><div className="mt-[10px] w-[80px] h-[2px] bg-[#666]" /><div className="mt-[4px] w-[60px] h-[2px] bg-[#555]" /><div className="mt-[4px] w-[70px] h-[2px] bg-[#555]" />
    </div>
    <div className="absolute left-[25px] top-[72px] w-[30px] h-[30px] rounded-full bg-[#1c1c1c] text-white text-[14px] leading-[24px] text-center font-['Inter',sans-serif] font-bold">...</div>
  </div> },
  { node: <S>
    <defs><linearGradient id="trash" x1="0" y1="0" x2="0" y2="1"><stop offset="0" stopColor="#a4a6a6" /><stop offset="1" stopColor="#6c6e6e" /></linearGradient></defs>
    <path d="M14 12L24 -4L34 4L42 -10L50 2L60 -10L70 4L80 -2L86 12L50 20Z" fill="#dcdcdc" />
    <path d="M6 10C24 24 76 24 94 10L84 104C76 118 24 118 16 104Z" fill="url(#trash)" /><path d="M42 6L58 8L50 20Z" fill="#4a7ee6" />
  </S> },
];

function Dock() {
  return (
    <div className="mt-[2px] ml-[100px] w-[3220px] h-[137px] rounded-[36px] border-2 border-[#5a5d52] bg-[linear-gradient(90deg,#282f20,#1e2a22_30%,#2d3620_50%,#201c17_55%,#1f1b16_70%,#2c332a_80%,#3a3426_90%,#2a3030)] flex items-start pl-[16px] pt-[18px] gap-[28.2px]">
      {dock.map((d, i) =>
        d.sep ? (
          <div key={i} className="w-[2px] h-[102px] mt-[-2px] mx-[11.7px] bg-[#6b6d66] shrink-0" />
        ) : (
          <div key={i} className="relative w-[87px] h-[87px] shrink-0">
            {d.node}
            {d.dot && <span className="absolute left-[39px] top-[106px] w-[8px] h-[8px] rounded-full bg-[#a8b2a4]" />}
          </div>
        )
      )}
    </div>
  );
}

export default function App() {
  return (
    <div className="w-[3420px] h-[2214px] overflow-hidden bg-[radial-gradient(circle_at_30px_2120px,#3d5a2a_0,transparent_40px),radial-gradient(circle_at_60px_2190px,#2e4a20_0,transparent_40px),radial-gradient(circle_at_1900px_2212px,#4a3524_0,transparent_120px),radial-gradient(circle_at_900px_2212px,#4a5a36_0,transparent_200px),linear-gradient(90deg,#1c2a18,#2a3a20_20%,#1e2a18_45%,#2e1f16_60%,#23201a_80%,#0f1d22)] font-['Inter',sans-serif]">
      <MenuBar />
      <div className="mt-[2px] w-[3420px] h-[1986px] flex flex-col rounded-[20px] overflow-hidden bg-[#e6e6e6]">
        <Chrome />
        <div className="h-[2px] bg-[#4a4a4a] shrink-0" />
        <div className="relative flex-1 flex overflow-hidden">
          <Sidebar />
          <Column1 />
          <Column2 />
          <Column3 />
          <div className="absolute inset-0 bg-[linear-gradient(180deg,rgba(0,0,0,.4)_75%,rgba(0,0,0,.46))]" />
          <Modal />
        </div>
      </div>
      <Dock />
    </div>
  );
}
